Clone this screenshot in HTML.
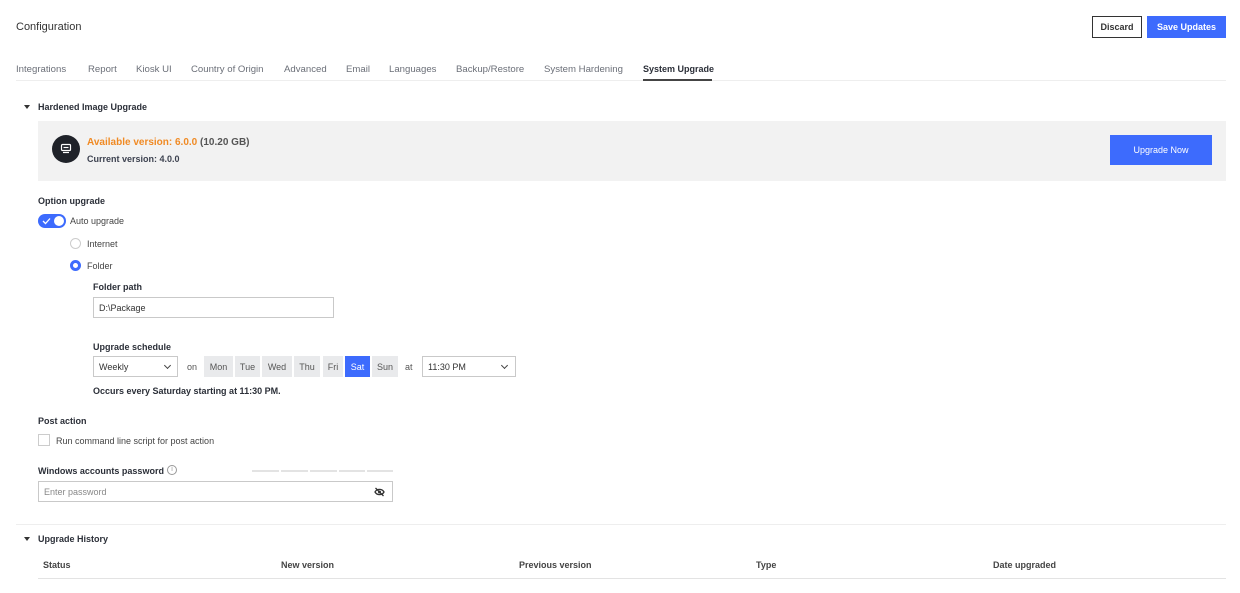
<!DOCTYPE html>
<html><head><meta charset="utf-8"><style>
*{box-sizing:border-box;margin:0;padding:0}
body{width:1240px;height:593px;background:#fff;font-family:"Liberation Sans",sans-serif;color:#333;position:relative;overflow:hidden;font-size:9px}
.a{position:absolute;white-space:nowrap}
.b{font-weight:bold;color:#2b2f38}
.btn{position:absolute;display:flex;align-items:center;justify-content:center;font-weight:bold;font-size:9px}
.tab{position:absolute;top:64px;font-size:9.6px;color:#6b6f78}
.day{position:absolute;top:356px;height:21px;background:#e9eaec;display:flex;align-items:center;justify-content:center;color:#555;font-size:9px}
.inp{position:absolute;border:1px solid #c9c9c9;background:#fff;display:flex;align-items:center;padding-left:5px;font-size:9px}
.tri{position:absolute;width:0;height:0;border-left:3px solid transparent;border-right:3px solid transparent;border-top:4px solid #333}
.chev{position:absolute;width:5px;height:5px;border-right:1.3px solid #444;border-bottom:1.3px solid #444;transform:rotate(45deg)}
</style></head><body>
<div class="a" style="left:16px;top:21px;font-size:11px;color:#333">Configuration</div>
<div class="btn" style="left:1092px;top:16px;width:50px;height:22px;border:1px solid #333;color:#333">Discard</div>
<div class="btn" style="left:1147px;top:16px;width:79px;height:22px;background:#3d6bfd;color:#fff">Save Updates</div>

<div class="tab" style="left:16px">Integrations</div>
<div class="tab" style="left:88px">Report</div>
<div class="tab" style="left:136px">Kiosk UI</div>
<div class="tab" style="left:191px">Country of Origin</div>
<div class="tab" style="left:284px">Advanced</div>
<div class="tab" style="left:346px">Email</div>
<div class="tab" style="left:389px">Languages</div>
<div class="tab" style="left:456px">Backup/Restore</div>
<div class="tab" style="left:544px">System Hardening</div>
<div class="tab" style="left:643px;color:#2b2f38;font-weight:bold;font-size:9px">System Upgrade</div>
<div class="a" style="left:16px;top:80px;width:1210px;height:1px;background:#eee"></div>
<div class="a" style="left:643px;top:79px;width:69px;height:2px;background:#444"></div>

<div class="tri" style="left:24px;top:105px"></div>
<div class="a b" style="left:38px;top:102px">Hardened Image Upgrade</div>
<div class="a" style="left:38px;top:121px;width:1188px;height:60px;background:#f2f2f2"></div>
<div class="a" style="left:52px;top:135px;width:28px;height:28px;border-radius:50%;background:#1f2229"></div>
<svg class="a" style="left:60px;top:143px" width="12" height="12" viewBox="0 0 12 12"><rect x="1.5" y="1.5" width="9" height="6" rx="1" fill="none" stroke="#fff" stroke-width="1.2"/><line x1="3.5" y1="4.5" x2="8.5" y2="4.5" stroke="#fff" stroke-width="1.2"/><line x1="3" y1="9.5" x2="9" y2="9.5" stroke="#fff" stroke-width="1.2"/></svg>
<div class="a" style="left:87px;top:137px;font-size:10px;font-weight:bold"><span style="color:#f08a24">Available version: 6.0.0</span> <span style="color:#555">(10.20 GB)</span></div>
<div class="a b" style="left:87px;top:154px;color:#3d4250">Current version: 4.0.0</div>
<div class="btn" style="left:1110px;top:135px;width:102px;height:30px;background:#3d6bfd;color:#fff;font-weight:normal">Upgrade Now</div>

<div class="a b" style="left:38px;top:196px">Option upgrade</div>
<div class="a" style="left:38px;top:214px;width:28px;height:14px;border-radius:7px;background:#3d6bfd"></div>
<div class="a" style="left:54px;top:216px;width:10px;height:10px;border-radius:50%;background:#fff"></div>
<svg class="a" style="left:42px;top:217px" width="9" height="8"><path d="M1 4l2.5 2.5L8 1.5" stroke="#fff" stroke-width="1.3" fill="none"/></svg>
<div class="a" style="left:70px;top:216px;color:#444">Auto upgrade</div>
<div class="a" style="left:70px;top:238px;width:11px;height:11px;border-radius:50%;border:1px solid #ccc"></div>
<div class="a" style="left:87px;top:239px;color:#444">Internet</div>
<div class="a" style="left:70px;top:260px;width:11px;height:11px;border-radius:50%;border:3.5px solid #3d6bfd"></div>
<div class="a" style="left:87px;top:261px;color:#444">Folder</div>

<div class="a b" style="left:93px;top:282px">Folder path</div>
<div class="inp" style="left:93px;top:297px;width:241px;height:21px">D:\Package</div>

<div class="a b" style="left:93px;top:342px">Upgrade schedule</div>
<div class="inp" style="left:93px;top:356px;width:85px;height:21px">Weekly</div>
<div class="chev" style="left:165px;top:363px"></div>
<div class="a" style="left:187px;top:362px;color:#555">on</div>
<div class="day" style="left:204px;width:29px">Mon</div>
<div class="day" style="left:235px;width:25px">Tue</div>
<div class="day" style="left:262px;width:30px">Wed</div>
<div class="day" style="left:294px;width:26px">Thu</div>
<div class="day" style="left:323px;width:20px">Fri</div>
<div class="day" style="left:345px;width:25px;background:#3d6bfd;color:#fff">Sat</div>
<div class="day" style="left:372px;width:26px">Sun</div>
<div class="a" style="left:405px;top:362px;color:#555">at</div>
<div class="inp" style="left:422px;top:356px;width:94px;height:21px">11:30 PM</div>
<div class="chev" style="left:502px;top:363px"></div>
<div class="a b" style="left:93px;top:386px">Occurs every Saturday starting at 11:30 PM.</div>

<div class="a b" style="left:38px;top:416px">Post action</div>
<div class="a" style="left:38px;top:434px;width:12px;height:12px;border:1px solid #ccc"></div>
<div class="a" style="left:56px;top:436px;color:#444">Run command line script for post action</div>

<div class="a b" style="left:38px;top:466px">Windows accounts password</div>
<div class="a" style="left:167px;top:465px;width:10px;height:10px;border-radius:50%;border:1px solid #999;font-size:7px;color:#999;text-align:center;line-height:8px">i</div>
<div class="a" style="left:252px;top:470px;width:27px;height:2px;background:#e3e3e3"></div>
<div class="a" style="left:281px;top:470px;width:27px;height:2px;background:#e3e3e3"></div>
<div class="a" style="left:310px;top:470px;width:27px;height:2px;background:#e3e3e3"></div>
<div class="a" style="left:339px;top:470px;width:26px;height:2px;background:#e3e3e3"></div>
<div class="a" style="left:367px;top:470px;width:26px;height:2px;background:#e3e3e3"></div>
<div class="inp" style="left:38px;top:481px;width:355px;height:21px;color:#888">Enter password</div>
<svg class="a" style="left:374px;top:487px" width="11" height="10" viewBox="0 0 11 10"><path d="M1 5c2-3.5 7-3.5 9 0c-2 3.5-7 3.5-9 0z" fill="none" stroke="#333" stroke-width="1.3"/><circle cx="5.5" cy="5" r="1.5" fill="#333"/><line x1="1.5" y1="1" x2="9.5" y2="9" stroke="#333" stroke-width="1.3"/></svg>

<div class="a" style="left:16px;top:524px;width:1210px;height:1px;background:#eee"></div>
<div class="tri" style="left:24px;top:537px"></div>
<div class="a b" style="left:38px;top:534px">Upgrade History</div>
<div class="a b" style="left:43px;top:560px;color:#444">Status</div>
<div class="a b" style="left:281px;top:560px;color:#444">New version</div>
<div class="a b" style="left:519px;top:560px;color:#444">Previous version</div>
<div class="a b" style="left:756px;top:560px;color:#444">Type</div>
<div class="a b" style="left:993px;top:560px;color:#444">Date upgraded</div>
<div class="a" style="left:38px;top:578px;width:1188px;height:1px;background:#e3e3e3"></div>
</body></html>
